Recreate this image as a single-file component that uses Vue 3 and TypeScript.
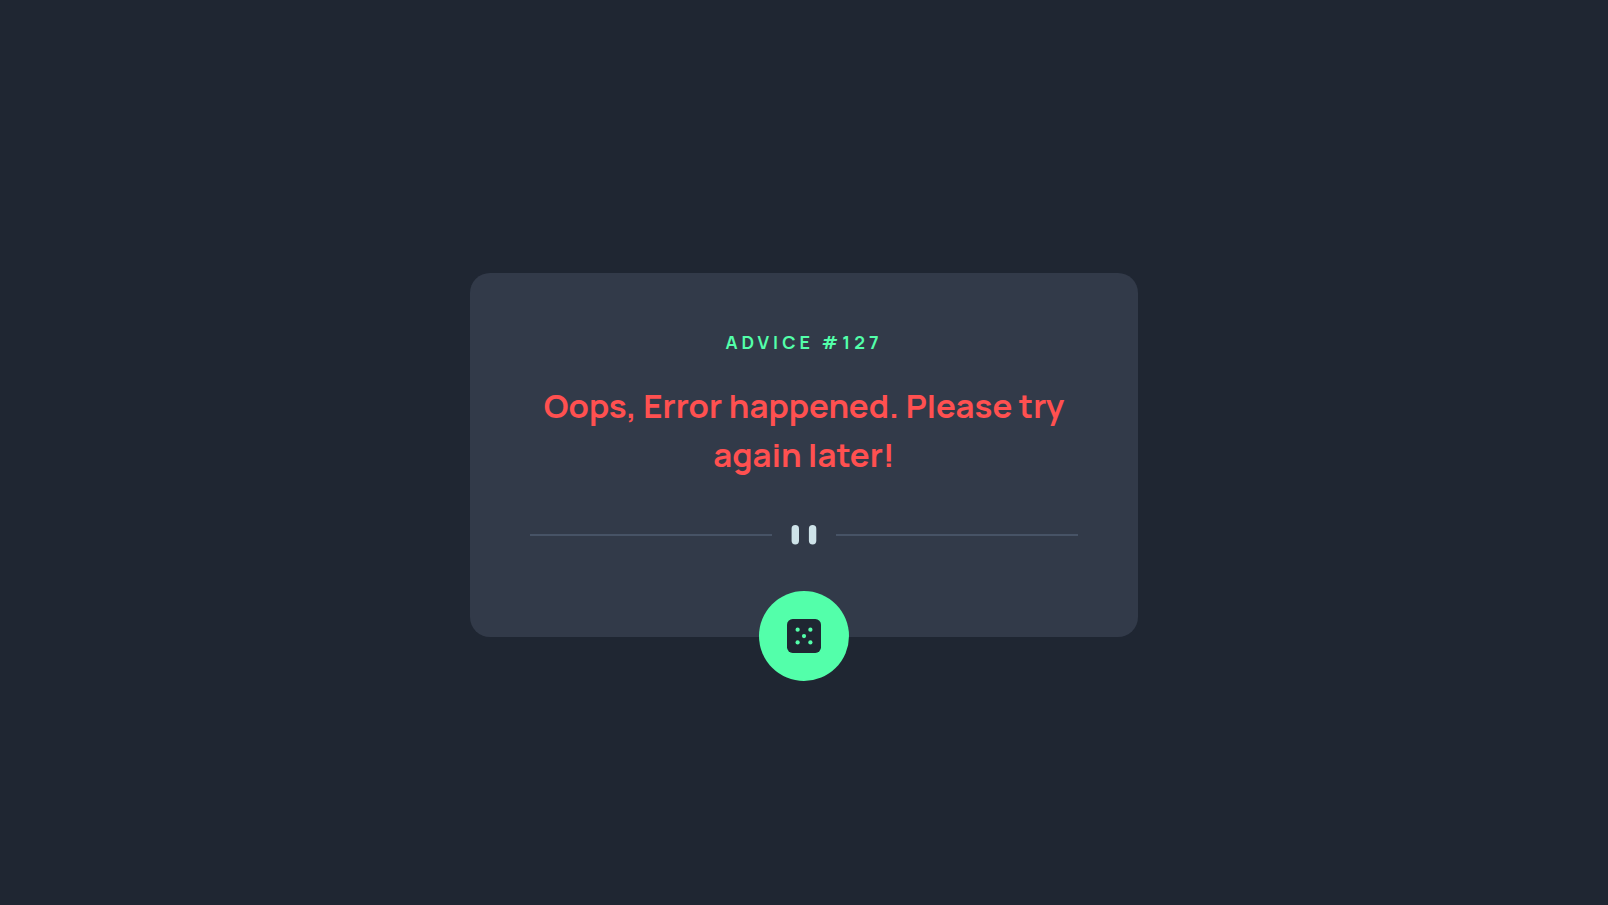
<script setup lang="ts">
import { ref } from 'vue'

const adviceId = ref<number>(127)
const message = ref<string>('Oops, Error happened. Please try again later!')
const pips: [number, number][] = [[7.5, 7.5], [16.5, 7.5], [12, 12], [7.5, 16.5], [16.5, 16.5]]
</script>

<template>
  <main class="page">
    <section class="card">
      <h1 class="label">ADVICE #{{ adviceId }}</h1>
      <p class="message">{{ message }}</p>
      <div class="divider">
        <span class="line"></span>
        <svg class="quote" viewBox="0 0 26 20" aria-hidden="true">
          <rect x="0.6" y="0.1" width="7.4" height="19.3" rx="3.7" />
          <rect x="17.9" y="0.1" width="7.4" height="19.3" rx="3.7" />
        </svg>
        <span class="line"></span>
      </div>
      <button class="dice" type="button" aria-label="Get new advice">
        <svg viewBox="0 0 24 24" aria-hidden="true">
          <rect class="face" width="24" height="24" rx="4" />
          <circle v-for="([x, y], i) in pips" :key="i" class="pip" :cx="x" :cy="y" r="1.5" />
        </svg>
      </button>
    </section>
  </main>
</template>

<style>
body {
  margin: 0;
  background: #1f2632;
}
</style>

<style scoped>
.page {
  box-sizing: border-box;
  min-height: 100vh;
  padding: 5px 16px 0;
  display: flex;
  align-items: center;
  justify-content: center;
  background: #1f2632;
  font-family: Manrope, Inter, "Liberation Sans", sans-serif;
}
.card {
  position: relative;
  box-sizing: border-box;
  width: 100%;
  max-width: 668px;
  padding: 56px 60px 92px;
  border-radius: 20px;
  background: #323a49;
  text-align: center;
}
.label {
  margin: 0;
  color: #53ffaa;
  font-size: 18px;
  font-weight: 700;
  line-height: 26px;
  letter-spacing: 4px;
}
.message {
  margin: 26px 0 46px;
  color: #ff5050;
  font-size: 33px;
  font-weight: 700;
  line-height: 49px;
}
.divider {
  display: flex;
  align-items: center;
  gap: 19px;
}
.line {
  flex: 1;
  height: 2px;
  background: #475366;
}
.quote {
  display: block;
  width: 26px;
  height: 20px;
  fill: #cee3e9;
}
.dice {
  position: absolute;
  left: 50%;
  bottom: -44px;
  transform: translateX(-50%);
  display: flex;
  align-items: center;
  justify-content: center;
  width: 90px;
  height: 90px;
  padding: 0;
  border: 0;
  border-radius: 50%;
  background: #53ffaa;
  cursor: pointer;
}
.dice svg {
  width: 34px;
  height: 34px;
}
.face {
  fill: #1f2632;
}
.pip {
  fill: #53ffaa;
}
</style>
